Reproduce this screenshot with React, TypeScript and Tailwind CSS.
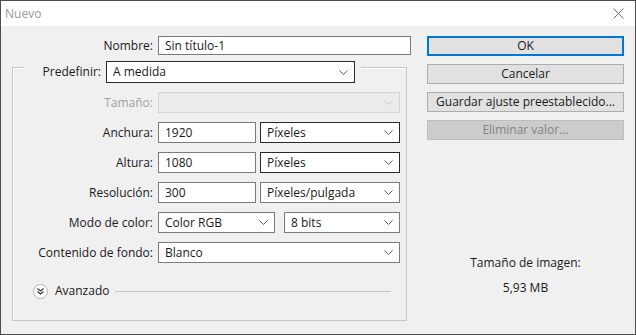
import React from "react";

function Chevron({ disabled = false }: { disabled?: boolean }) {
  return (
    <svg width="9" height="5" viewBox="0 0 9 5" className="shrink-0">
      <path d="M0.5 0.5 L4.5 4.5 L8.5 0.5" fill="none" stroke={disabled ? "#c4c4c4" : "#5a5a5a"} strokeWidth="1" />
    </svg>
  );
}

function Select({
  value,
  w,
  h = "h-[21px]",
  dark = false,
  disabled = false,
}: {
  value: string;
  w: string;
  h?: string;
  dark?: boolean;
  disabled?: boolean;
}) {
  const border = disabled ? "border-[#d4d4d4] bg-[#ececec]" : dark ? "border-[#2a2a2a] bg-white" : "border-[#7a7a7a] bg-white";
  return (
    <div className={`${w} ${h} ${border} border flex items-center justify-between pl-[6px] pr-[6px] shrink-0`}>
      <span className="leading-none">{value}</span>
      <Chevron disabled={disabled} />
    </div>
  );
}

function Input({ value, w, h = "h-[21px]" }: { value: string; w: string; h?: string }) {
  return (
    <div className={`${w} ${h} border border-[#7a7a7a] bg-white flex items-center pl-[6px] shrink-0`}>
      <span className="leading-none">{value}</span>
    </div>
  );
}

function Button({ label, primary = false, disabled = false }: { label: string; primary?: boolean; disabled?: boolean }) {
  const style = primary
    ? "border-2 border-[#0078d7] bg-[#e1e1e1]"
    : disabled
    ? "border border-[#bfbfbf] bg-[#cccccc] text-[#838383]"
    : "border border-[#adadad] bg-[#e1e1e1]";
  return <div className={`h-[20px] flex items-center justify-center ${style}`}>{label}</div>;
}

export default function App() {
  return (
    <div className="w-[636px] h-[335px] border border-[#4d4d4d] bg-[#f0f0f0] flex flex-col font-['Segoe_UI','Open_Sans',sans-serif] text-[12px] text-[#1a1a1a]">
      <div className="h-[25px] bg-white flex items-center justify-between pl-[4px] pr-[11px] shrink-0">
        <span className="text-[#999999]">Nuevo</span>
        <svg width="11" height="11" viewBox="0 0 11 11">
          <path d="M0.5 0.5 L10.5 10.5 M10.5 0.5 L0.5 10.5" stroke="#6f6f6f" strokeWidth="1" />
        </svg>
      </div>

      <div className="flex pl-[11px] pt-[10px]">
        <div className="w-[400px] flex flex-col">
          <div className="grid grid-cols-[141px_1fr] gap-x-[5px] items-center">
            <span className="text-right">Nombre:</span>
            <Input value="Sin título-1" w="w-[253px]" h="h-[19px]" />
          </div>

          <div className="mt-[12px] w-[395px] h-[254px] border border-[#c6c6c6] shadow-[inset_1px_1px_0_#ffffff] flex flex-col">
            <div className="-mt-[7px] ml-[12px] self-start flex items-center gap-[5px] bg-[#f0f0f0] pr-[6px]">
              <span className="w-[76px] text-right">Predefinir:</span>
              <Select value="A medida" w="w-[249px]" h="h-[22px]" dark />
            </div>

            <div className="mt-[9px] grid grid-cols-[140px_1fr] gap-x-[5px] gap-y-[9px] items-center">
              <span className="text-right text-[#a0a0a0]">Tamaño:</span>
              <Select value="" w="w-[242px]" disabled />

              <span className="text-right">Anchura:</span>
              <div className="flex gap-[4px]">
                <Input value="1920" w="w-[98px]" />
                <Select value="Píxeles" w="w-[140px]" dark />
              </div>

              <span className="text-right">Altura:</span>
              <div className="flex gap-[4px]">
                <Input value="1080" w="w-[98px]" />
                <Select value="Píxeles" w="w-[140px]" dark />
              </div>

              <span className="text-right">Resolución:</span>
              <div className="flex gap-[4px]">
                <Input value="300" w="w-[98px]" />
                <Select value="Píxeles/pulgada" w="w-[140px]" />
              </div>

              <span className="text-right">Modo de color:</span>
              <div className="flex gap-[9px]">
                <Select value="Color RGB" w="w-[117px]" />
                <Select value="8 bits" w="w-[116px]" />
              </div>

              <span className="text-right">Contenido de fondo:</span>
              <Select value="Blanco" w="w-[242px]" />
            </div>

            <div className="mt-[20px] h-[16px] ml-[20px] mr-[15px] flex items-center">
              <div className="w-[15px] h-[15px] rounded-full border border-[#b5b5b5] bg-white flex items-center justify-center shrink-0">
                <svg width="7" height="7" viewBox="0 0 7 7">
                  <path d="M0.5 0.5 L3.5 3 L6.5 0.5 M0.5 3.5 L3.5 6 L6.5 3.5" fill="none" stroke="#333333" strokeWidth="1.1" />
                </svg>
              </div>
              <span className="ml-[7px]">Avanzado</span>
              <div className="ml-[6px] flex-1 h-px bg-[#c6c6c6]" />
            </div>
          </div>
        </div>

        <div className="ml-[15px] w-[197px] flex flex-col">
          <div className="flex flex-col gap-[8px]">
            <Button label="OK" primary />
            <Button label="Cancelar" />
            <Button label="Guardar ajuste preestablecido..." />
            <Button label="Eliminar valor..." disabled />
          </div>
          <div className="mt-[115px] flex flex-col items-center gap-[9px] leading-[16px]">
            <span>Tamaño de imagen:</span>
            <span>5,93 MB</span>
          </div>
        </div>
      </div>
    </div>
  );
}
